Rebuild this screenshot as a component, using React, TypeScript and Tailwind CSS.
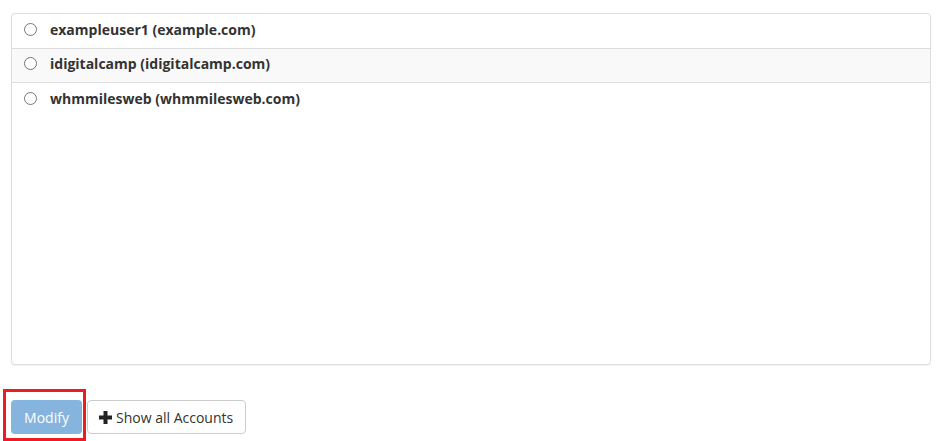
const accounts = [
  { user: 'exampleuser1', domain: 'example.com' },
  { user: 'idigitalcamp', domain: 'idigitalcamp.com' },
  { user: 'whmmilesweb', domain: 'whmmilesweb.com' },
];

export default function App() {
  return (
    <div className="w-[937px] h-[441px] bg-white font-['Open_Sans',sans-serif] text-[#333] overflow-hidden">
      <div className="pl-[11px] pr-[6px] pt-[13px]">
        <div className="h-[352px] border border-[#ddd] rounded-[4px] shadow-[0_1px_1px_rgba(0,0,0,0.05)] bg-white overflow-hidden">
          {accounts.map((a, i) => (
            <label
              key={a.user}
              className={`flex items-center pl-[12px] pb-[4px] ${i === 0 ? 'h-[35px]' : 'h-[34px]'} ${i === 1 ? 'bg-[#f9f9f9]' : ''} ${i < 2 ? 'border-b border-[#ddd]' : ''}`}
            >
              <span className="w-[13px] h-[13px] rounded-full border border-[#767676] bg-white shrink-0" />
              <span className="ml-[13px] text-[14px] font-bold text-[#333]">
                {a.user} ({a.domain})
              </span>
            </label>
          ))}
        </div>
      </div>

      <div className="flex items-start pl-[3px] pt-[24px]">
        <div className="border-[3px] border-[#ed1c24] pt-[8px] pl-[5px] pr-[1px] pb-[4px]">
          <button className="w-[71px] h-[34px] rounded-[4px] bg-[#85b4de] text-white text-[14px]">
            Modify
          </button>
        </div>
        <button className="mt-[11px] ml-[1px] h-[34px] pl-[11px] pr-[12px] flex items-center gap-[4px] border border-[#ccc] rounded-[4px] bg-white text-[14px] text-[#333]">
          <svg width="13" height="13" viewBox="0 0 13 13">
            <path d="M4.5 0h4v4.5H13v4H8.5V13h-4V8.5H0v-4h4.5z" fill="#222" />
          </svg>
          Show all Accounts
        </button>
      </div>
    </div>
  );
}
